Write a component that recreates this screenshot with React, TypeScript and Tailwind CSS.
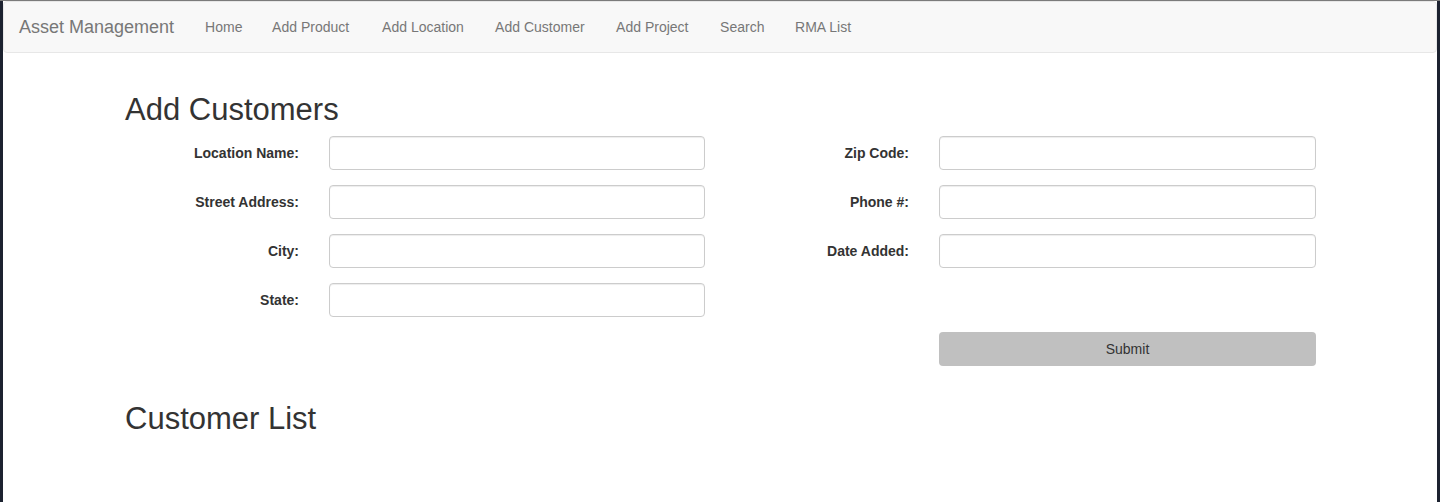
const navLinks = [
  { label: "Home", w: "w-[67px]" },
  { label: "Add Product", w: "w-[110px]" },
  { label: "Add Location", w: "w-[113px]" },
  { label: "Add Customer", w: "w-[121px]" },
  { label: "Add Project", w: "w-[104px]" },
  { label: "Search", w: "w-[75px]" },
  { label: "RMA List", w: "w-[90px]" },
];

const leftFields = ["Location Name:", "Street Address:", "City:", "State:"];
const rightFields = ["Zip Code:", "Phone #:", "Date Added:"];

function Field({ label, wide }: { label: string; wide?: boolean }) {
  return (
    <div className="flex items-center gap-[30px]">
      <label className="w-[174px] text-right text-[14px] font-bold text-[#333]">{label}</label>
      <input
        type="text"
        className={`h-[34px] ${wide ? "w-[377px]" : "w-[376px]"} rounded-[4px] border border-[#ccc] bg-white px-3 shadow-[inset_0_1px_1px_rgba(0,0,0,0.075)] outline-none`}
      />
    </div>
  );
}

function Navbar() {
  return (
    <nav className="flex h-[52px] items-center rounded-[4px] border border-[#e7e7e7] bg-[#f8f8f8]">
      <a className="pl-[15px] pr-[16px] text-[18px] text-[#777]">Asset Management</a>
      <ul className="flex">
        {navLinks.map((l) => (
          <li key={l.label} className={`${l.w} whitespace-nowrap px-[15px] text-[14px] text-[#777]`}>
            {l.label}
          </li>
        ))}
      </ul>
    </nav>
  );
}

export default function App() {
  return (
    <div
      className="flex h-[502px] w-full overflow-hidden border-t border-[#7b7b7b] bg-[#1c2230]"
      style={{ fontFamily: '"Liberation Sans", Arial, sans-serif' }}
    >
      <div className="ml-[3px] mr-[3px] flex-1 bg-white">
        <Navbar />
        <main className="pl-[122px]">
          <h2 className="mt-[40px] text-[31px] leading-[33px] text-[#333]">Add Customers</h2>
          <form className="mt-[10px] flex gap-[30px]">
            <div className="flex flex-col gap-[15px]">
              {leftFields.map((f) => (
                <Field key={f} label={f} />
              ))}
            </div>
            <div className="flex flex-col gap-[15px]">
              {rightFields.map((f) => (
                <Field key={f} label={f} wide />
              ))}
              <div className="h-[34px]" />
              <div className="flex gap-[30px]">
                <div className="w-[174px]" />
                <button
                  type="button"
                  className="h-[34px] w-[377px] rounded-[4px] bg-[#c0c0c0] text-[14px] text-[#333]"
                >
                  Submit
                </button>
              </div>
            </div>
          </form>
          <h2 className="mt-[36px] text-[31px] leading-[33px] text-[#333]">Customer List</h2>
        </main>
      </div>
    </div>
  );
}
